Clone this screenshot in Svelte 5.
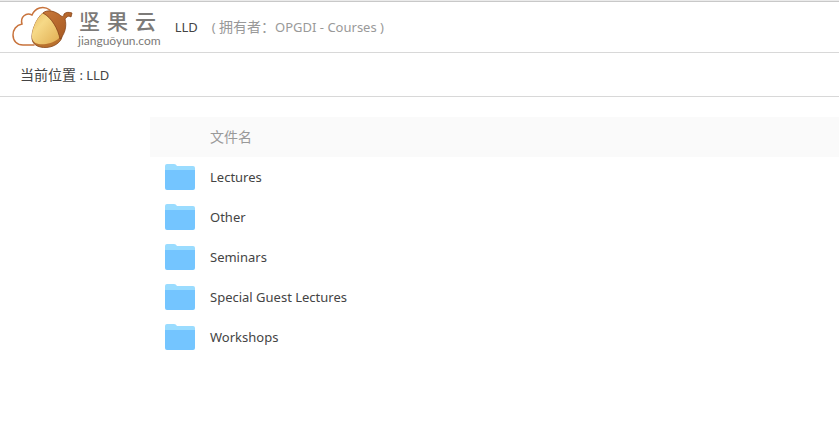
<script>
  const folders = ['Lectures', 'Other', 'Seminars', 'Special Guest Lectures', 'Workshops'];
  const brand = ['坚', '果', '云'];
</script>

<header class="topbar">
  <a class="logo" href="/" aria-label="坚果云">
    <svg class="logo-mark" viewBox="0 0 62 44" aria-hidden="true">
      <defs>
        <linearGradient id="nut" x1="0" y1="0" x2="1" y2="1">
          <stop offset="0" stop-color="#e9bb60" />
          <stop offset="0.35" stop-color="#f6d987" />
          <stop offset="1" stop-color="#e0ac50" />
        </linearGradient>
        <linearGradient id="cap" x1="0" y1="0" x2="1" y2="1">
          <stop offset="0" stop-color="#c8783a" />
          <stop offset="1" stop-color="#a3561f" />
        </linearGradient>
      </defs>
      <path
        d="M22 40H11C5 40 1 36 1 30C1 25 4 20 10 19C8 12 14 7 20 10C23 3 31 0 38 5"
        fill="none" stroke="#c8733c" stroke-width="1.5" stroke-linecap="round"
      />
      <path d="M31 8C25 12 19 26 20 34C21 43 34 44 41 41C46 39 50 35 50 31L38 10Z" fill="#b9712e" stroke="#87451a" stroke-width="0.8" />
      <path d="M31 8C25 12 19 25 20 33C21 39 28 40 34 39C40 38 46 35 48 32C46 22 40 13 31 8Z" fill="url(#nut)" />
      <path d="M31 8C35 4 44 6 49 11C51 12 52 11 52 9C54 7 57 7 60 8L59 12C56 10 55 12 53 14C55 21 53 29 48 34C46 24 40 13 31 8Z" fill="url(#cap)" stroke="#87451a" stroke-width="0.8" stroke-linejoin="round" />
    </svg>
    <span class="logo-text">
      <span class="brand">
        {#each brand as char}<span>{char}</span>{/each}
      </span>
      <span class="domain">jianguōyun.com</span>
    </span>
  </a>
  <span class="title">LLD</span>
  <span class="owner">( <span class="zh">拥有者：</span>OPGDI - Courses )</span>
</header>

<nav class="location" aria-label="当前位置"><span class="zh">当前位置</span> : LLD</nav>

<main>
  <table>
    <thead>
      <tr>
        <th class="icon-cell"></th>
        <th scope="col" class="zh">文件名</th>
      </tr>
    </thead>
    <tbody>
      {#each folders as name}
        <tr>
          <td class="icon-cell">
            <svg class="folder" viewBox="0 0 32 26" aria-hidden="true">
              <path d="M1 2Q1 0 3 0H10Q12 0 13 2H29Q31 2 31 4V14H1Z" fill="#9adcff" />
              <path d="M1 6H31V24Q31 26 29 26H3Q1 26 1 24Z" fill="#74c5ff" />
            </svg>
          </td>
          <td><a href="#{name}">{name}</a></td>
        </tr>
      {/each}
    </tbody>
  </table>
</main>

<style>
  :global(body) {
    margin: 0;
    background: #fff;
    color: #444;
    font: 13px/20px "Noto Sans", "Noto Sans CJK SC", sans-serif;
  }

  a {
    color: inherit;
    text-decoration: none;
  }

  .zh {
    font-size: 14px;
  }

  .topbar {
    display: flex;
    align-items: center;
    height: 50px;
    padding: 1px 0 0 12px;
    border-top: 1px solid #ebebeb;
    border-bottom: 1px solid #d8d8d8;
    box-shadow: inset 0 1px #c8c8c8;
  }

  .logo {
    display: flex;
    align-items: center;
    gap: 4px;
    margin-right: 14px;
  }

  .logo-mark {
    width: 62px;
    height: 44px;
  }

  .logo-text {
    display: flex;
    flex-direction: column;
    padding-top: 4px;
    color: #7c7a78;
  }

  .brand {
    display: flex;
    gap: 7px;
    padding-left: 1px;
    font-family: "Liberation Sans", "Noto Sans CJK SC", sans-serif;
    font-size: 21px;
    font-weight: 500;
    line-height: 24px;
  }

  .domain {
    font-family: Lato, sans-serif;
    font-size: 12px;
    line-height: 14px;
  }

  .owner {
    margin-left: 14px;
    color: #999;
  }

  .location {
    padding: 12px 20px 11px;
    border-bottom: 1px solid #d8d8d8;
  }

  main {
    padding: 20px 0 0 150px;
  }

  table {
    width: 100%;
    border-collapse: collapse;
  }

  th,
  td {
    height: 40px;
    padding: 0;
    font-weight: normal;
    text-align: left;
  }

  th {
    background: #fafafa;
    color: #999;
  }

  .icon-cell {
    width: 46px;
    padding-left: 14px;
  }

  .folder {
    display: block;
    width: 32px;
    height: 26px;
  }
</style>
